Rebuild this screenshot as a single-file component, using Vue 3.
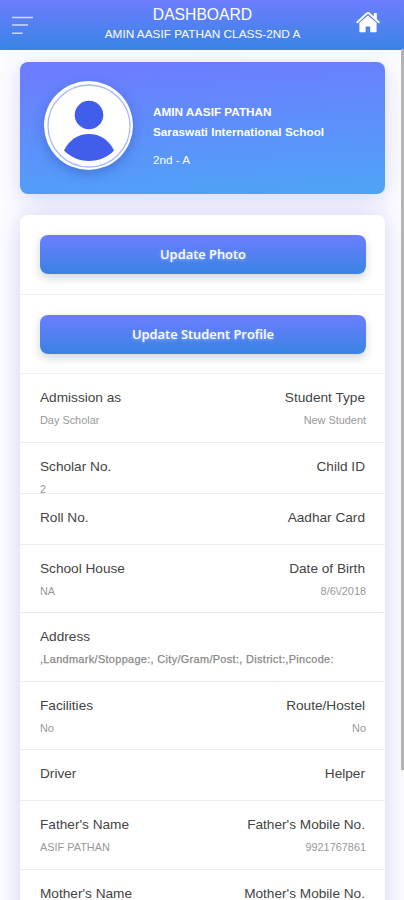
<script setup>
const rows = [
  { height: 69, left: ['Admission as', 'Day Scholar'], right: ['Student Type', 'New Student'] },
  { height: 51, left: ['Scholar No.', '2'], right: ['Child ID', ''] },
  { height: 51, left: ['Roll No.', ''], right: ['Aadhar Card', ''] },
  { height: 68, left: ['School House', 'NA'], right: ['Date of Birth', '8/6\\/2018'] },
  { height: 69, left: ['Address', ',Landmark/Stoppage:, City/Gram/Post:, District:,Pincode:'], wide: true },
  { height: 68, left: ['Facilities', 'No'], right: ['Route/Hostel', 'No'] },
  { height: 51, left: ['Driver', ''], right: ['Helper', ''] },
  { height: 69, left: ["Father's Name", 'ASIF PATHAN'], right: ["Father's Mobile No.", '9921767861'] },
  { height: 68, left: ["Mother's Name", ''], right: ["Mother's Mobile No.", ''] },
]
</script>

<template>
  <div class="page">
    <header class="bar">
      <svg class="menu" width="22" height="20" viewBox="0 0 22 20">
        <path d="M0 2.5H21M0 10H16M0 18.3H10.5" fill="none" stroke="#cfdcff" stroke-width="1.5" />
      </svg>
      <div class="heading">
        <h1>DASHBOARD</h1>
        <p>AMIN AASIF PATHAN CLASS-2ND A</p>
      </div>
      <svg class="home" width="24" height="22" viewBox="0 0 24 22">
        <path d="M12 4.6 3.4 11.8V20.4q0 .9.9.9H9.6V15.6h4.6v5.7h5.5q.9 0 .9-.9V11.8Z" fill="#fff" />
        <path d="M1.2 11.2 11 2.3q1-.8 2 0L22.8 11.2" fill="none" stroke="#fff" stroke-width="1.9" stroke-linecap="round" />
        <path d="M17.8 2H20.8V8.8L17.8 6Z" fill="#fff" />
      </svg>
    </header>
    <main class="content">
      <section class="student">
        <div class="avatar">
          <svg width="84" height="84" viewBox="0 0 84 84">
            <circle cx="42" cy="42" r="41" fill="#fff" stroke="#a9b9ff" stroke-width="1.3" />
            <circle cx="42" cy="31" r="14.3" fill="#405eeb" />
            <path d="M17 66.6C22 56 31 50 42 50S62 56 67 66.6C60.5 73.5 52 77 42 77S24 73.5 17 66.6Z" fill="#405eeb" />
          </svg>
        </div>
        <div class="about">
          <strong>AMIN AASIF PATHAN</strong>
          <strong>Saraswati International School</strong>
          <span>2nd - A</span>
        </div>
      </section>
      <section class="details">
        <div class="action first"><button>Update Photo</button></div>
        <div class="action"><button>Update Student Profile</button></div>
        <div v-for="row in rows" :key="row.left[0]" class="row" :style="{ height: row.height + 'px' }">
          <div class="cell">
            <div class="label">{{ row.left[0] }}</div>
            <div class="value" :class="{ address: row.wide }">{{ row.left[1] }}</div>
          </div>
          <div v-if="row.right" class="cell end">
            <div class="label">{{ row.right[0] }}</div>
            <div class="value">{{ row.right[1] }}</div>
          </div>
        </div>
      </section>
    </main>
    <div class="scroll-thumb"></div>
  </div>
</template>

<style>
body {
  margin: 0;
  overflow: hidden;
}
</style>

<style scoped>
* {
  box-sizing: border-box;
}
.page {
  position: relative;
  height: 900px;
  overflow: hidden;
  font-family: "Liberation Sans", Arial, sans-serif;
  background: #fdfdff;
}
.bar {
  position: relative;
  z-index: 1;
  display: grid;
  grid-template-columns: 24px 1fr 24px;
  align-items: start;
  height: 49.5px;
  padding: 0 24px 0 12px;
  color: #fff;
  background: linear-gradient(#6c7dff, #3984e4);
}
.menu {
  margin-top: 14.5px;
}
.home {
  margin-top: 11px;
}
.heading {
  padding: 5px 0 0 13px;
  text-align: center;
}
h1 {
  margin: 0;
  font-size: 15.7px;
  font-weight: 400;
  line-height: 19px;
}
.heading p {
  margin: 0;
  font-size: 11.8px;
  line-height: 20px;
}
.content {
  display: flex;
  flex-direction: column;
  gap: 21px;
  padding: 12.5px 19px 0 20px;
}
.student {
  display: flex;
  flex: none;
  gap: 20px;
  height: 132px;
  padding: 19px 0 0 24px;
  border-radius: 8px;
  color: #fff;
  background: linear-gradient(176deg, #6c7dff 8%, #4fa3f7 96%);
  box-shadow: 0 5px 24px rgba(80, 80, 225, 0.22);
}
.avatar {
  display: grid;
  place-items: center;
  width: 89px;
  height: 89px;
  border-radius: 50%;
  background: #fff;
  box-shadow: 0 4px 12px rgba(30, 60, 160, 0.35);
}
.about {
  display: flex;
  flex-direction: column;
  padding-top: 21px;
  font-size: 11.75px;
  line-height: 20px;
}
.about span {
  margin-top: 8px;
  font-size: 11.7px;
}
.details {
  flex: none;
  border-radius: 8px 8px 0 0;
  background: #fff;
  box-shadow: 0 2px 26px rgba(80, 80, 225, 0.25);
}
.action {
  height: 79px;
  padding: 20px 19px 0 20px;
  border-bottom: 1.5px solid #eef1f2;
}
.action.first {
  height: 80px;
}
button {
  display: block;
  width: 100%;
  height: 39px;
  padding: 0 0 1px;
  border: 0;
  border-radius: 8px;
  color: #fff;
  font: 600 12.9px/38px "Open Sans", "Noto Sans", sans-serif;
  background: linear-gradient(#6c7dff, #3984e4);
  box-shadow: 0 4px 10px rgba(0, 0, 0, 0.17);
  text-shadow: 0 1px 3px rgba(255, 255, 255, 0.4);
}
.row {
  display: flex;
  justify-content: space-between;
  padding: 14px 20px 0 20px;
  border-bottom: 1.5px solid #eaeeef;
}
.end {
  text-align: right;
}
.label {
  color: #444;
  font-size: 13.65px;
  line-height: 20px;
}
.value {
  margin-top: 3px;
  color: #999;
  font-size: 10.9px;
  line-height: 19px;
  white-space: nowrap;
}
.end .value {
  margin-right: -1px;
}
.address {
  color: #888;
  letter-spacing: 0.34px;
  -webkit-text-stroke: 0.25px #888;
}
.scroll-thumb {
  position: absolute;
  top: 49px;
  right: 0;
  z-index: 2;
  width: 3px;
  height: 721px;
  background: #b3b3b5;
}
</style>
